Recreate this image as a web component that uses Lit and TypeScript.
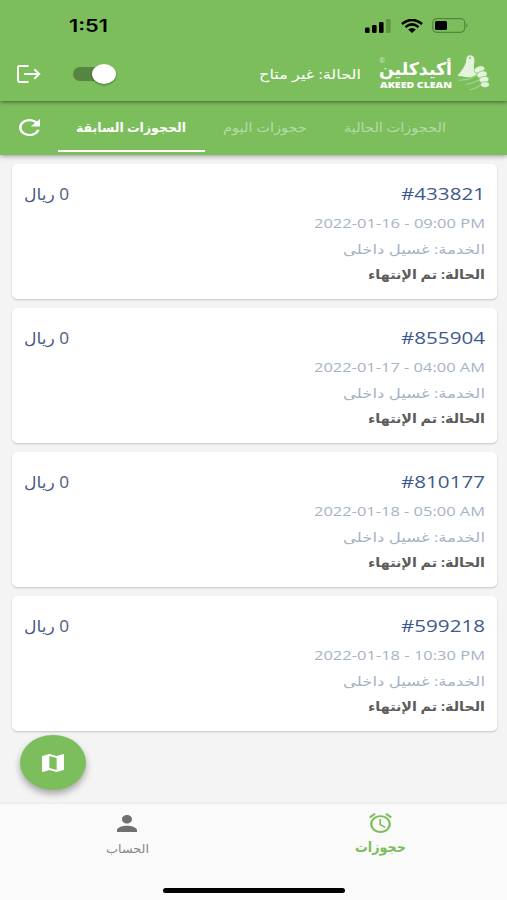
import { LitElement, html, css, svg } from "lit";
import { customElement, property, state, query } from "lit/decorators.js";
import { styleMap } from "lit/directives/style-map.js";

/** One line of text stretched or squeezed to a given width. */
@customElement("fit-text")
class FitText extends LitElement {
  @property({ type: Number }) w = 100;
  @property() text = "";
  @property() dir = "rtl";
  @state() private scale = 1;
  @query(".t") private span!: HTMLElement;

  static styles = css`
    :host { display: block; direction: ltr; white-space: nowrap; }
    .box { display: flex; direction: ltr; }
    .t { flex: none; transform-origin: 0 50%; }
  `;

  updated() {
    const natural = this.span.offsetWidth;
    if (natural) this.scale = this.w / this.span.getBoundingClientRect().width * this.scale;
  }

  render() {
    return html`<div class="box" style=${styleMap({ width: `${this.w}px` })}>
      <span class="t" dir=${this.dir} style=${styleMap({ transform: `scaleX(${this.scale})` })}>${this.text}</span>
    </div>`;
  }
}

interface Booking { id: string; date: string; }

@customElement("booking-card")
class BookingCard extends LitElement {
  @property({ attribute: false }) booking!: Booking;

  static styles = css`
    :host { display: block; box-sizing: border-box; height: 135px; background: #fff; border-radius: 5px;
      box-shadow: 0 1px 2px rgba(0, 0, 0, .2); padding: 17px 12.5px 0 12px; }
    .row { display: flex; justify-content: space-between; direction: rtl; height: 26px; line-height: 26px; }
    .top { color: #40598c; height: 29px; }
    .id { font-size: 17px; }
    .price { font-size: 15.5px; color: #4c5c80; }
    .date { color: #a7b2c5; font-size: 13px; }
    .service { color: #a7b2c5; font-size: 13px; height: 25px; }
    .status { color: #5c5c5c; font-size: 13px; font-weight: bold; height: 25px; }
  `;

  render() {
    const b = this.booking;
    return html`
      <div class="row top">
        <fit-text class="id" dir="ltr" .w=${84} .text=${b.id}></fit-text>
        <fit-text class="price" .w=${45} .text=${"0 ريال"}></fit-text>
      </div>
      <div class="row date"><fit-text dir="ltr" .w=${171} .text=${b.date}></fit-text></div>
      <div class="row service"><fit-text .w=${142} .text=${"الخدمة: غسيل داخلى"}></fit-text></div>
      <div class="row status"><fit-text .w=${117} .text=${"الحالة: تم الإنتهاء"}></fit-text></div>
    `;
  }
}

const signal = svg`
  <rect x="0" y="8.5" width="4.6" height="5.5" rx="1.2"/><rect x="7" y="6" width="4.6" height="8" rx="1.2"/>
  <rect x="14" y="3" width="4.6" height="11" rx="1.2"/><rect x="21" y="0" width="4.6" height="14" rx="1.2" opacity=".22"/>`;

@customElement("app-root")
class AppRoot extends LitElement {
  private bookings: Booking[] = [
    { id: "#433821", date: "2022-01-16 - 09:00 PM" },
    { id: "#855904", date: "2022-01-17 - 04:00 AM" },
    { id: "#810177", date: "2022-01-18 - 05:00 AM" },
    { id: "#599218", date: "2022-01-18 - 10:30 PM" },
  ];

  static styles = css`
    :host { display: flex; flex-direction: column; width: 507px; height: 900px; position: relative; overflow: hidden;
      background: #f4f4f4; font-family: "Open Sans", "DejaVu Sans", sans-serif; direction: ltr; }
    svg { display: block; flex: none; }
    .bar { background: #7cbe5c; height: 101px; flex: none; z-index: 2; box-shadow: 0 1px 4px rgba(0, 0, 0, .5); box-sizing: border-box; }
    .sys { display: flex; align-items: center; height: 51px; padding: 0 38px 0 69px; box-sizing: border-box; }
    .time { font: 600 17px/20px "Inter", sans-serif; margin-right: auto; }
    .wifi { margin: 0 9px 0 10px; }
    .head { display: flex; align-items: center; height: 45px; padding: 0 17px; color: #fff; }
    .toggle { position: relative; width: 43px; height: 20px; margin-left: 32px; margin-right: auto; }
    .track { width: 38px; height: 14px; border-radius: 7px; background: #568541; margin-top: 3px; }
    .knob { position: absolute; right: 0; top: 0; width: 24px; height: 20px; border-radius: 50%; background: #fff; box-shadow: 0 1px 2px rgba(0, 0, 0, .4); }
    .state { font-size: 13.5px; line-height: 20px; margin-right: 18px; }
    .brand { position: relative; margin-right: 5px; padding-top: 1px; }
    .name { font-size: 17.5px; line-height: 19px; font-weight: bold; }
    .latin { font: 800 9px/10px "Open Sans", sans-serif; margin-top: 2px; margin-left: 1px; }
    .reg { position: absolute; left: 0; top: -1px; font-size: 7px; line-height: 8px; opacity: .6; }
    .tabs { display: flex; align-items: stretch; height: 54px; flex: none; background: #7cbe5c; z-index: 1;
      box-shadow: 0 1px 5px rgba(0, 0, 0, .4); color: #b6dba4; font-size: 12.5px; line-height: 53px; }
    .refresh { margin: 18px 18px 0 19px; }
    .tab { display: flex; justify-content: center; box-sizing: border-box; }
    .active { width: 147px; color: #fff; font-weight: bold; border-bottom: 2px solid #fff; height: 51px; padding-right: 2px; }
    .today { width: 119px; }
    .current { width: 142px; }
    .list { display: flex; flex-direction: column; gap: 8.9px; padding: 9px 10px 0 12px; flex: 1; }
    .fab { position: absolute; left: 20px; top: 735px; width: 66px; height: 55px; border-radius: 50%; background: #7cbe5c;
      display: grid; place-items: center; box-shadow: 0 4px 7px rgba(0, 0, 0, .32); }
    .nav { height: 96px; flex: none; background: #fafafa; box-shadow: 0 -1px 2px rgba(0, 0, 0, .05); display: grid;
      grid-template-columns: 1fr 1fr; position: relative; }
    .item { display: flex; flex-direction: column; align-items: center; }
    .account { color: #707070; font-size: 12px; line-height: 18px; padding-top: 11px; }
    .account fit-text { margin-top: 8px; margin-left: 1px; color: #858585; }
    .book { color: #7cbe5c; font-size: 14px; line-height: 20px; font-weight: bold; padding-top: 9px; }
    .book fit-text { margin-top: 4px; }
    .home { position: absolute; left: 163px; top: 84px; width: 182px; height: 4.5px; border-radius: 3px; background: #000; }
  `;

  render() {
    return html`
      <div class="bar">
        <div class="sys">
          <div class="time"><fit-text dir="ltr" .w=${39} .text=${"1:51"}></fit-text></div>
          <svg width="26" height="14" viewBox="0 0 26 14">${signal}</svg>
          <svg class="wifi" width="22" height="14" viewBox="0 0 22 14" fill="none" stroke="#000" stroke-width="2.5">
            <path d="M.9 5Q11-3.2 21.1 5M4.5 8.1Q11 2.6 17.5 8.1"/><path d="M7.2 10.6Q11 7.4 14.8 10.6L11 14Z" fill="#000" stroke="none"/>
          </svg>
          <svg width="37" height="15" viewBox="0 0 37 15">
            <rect x=".7" y=".7" width="32" height="13.6" rx="4" fill="none" stroke="#568541" stroke-width="1.2"/>
            <rect x="3" y="3" width="12" height="9" rx="1.5"/><path d="M34.3 5Q36.8 7.5 34.3 10Z" fill="#568541"/>
          </svg>
        </div>
        <div class="head">
          <svg width="24" height="18" viewBox="0 0 24 18" fill="none" stroke="#fff" stroke-width="1.9">
            <path d="M11.5 1H2.5Q1 1 1 2.5V15.500Q1 17 2.500 17H11.500M7 9H22M17.300 4.300L22.300 9L17.300 13.700"/>
          </svg>
          <div class="toggle"><div class="track"></div><div class="knob"></div></div>
          <fit-text class="state" .w=${102} .text=${"الحالة: غير متاح"}></fit-text>
          <div class="brand">
            <span class="reg">®</span>
            <fit-text class="name" .w=${73} .text=${"أكيدكلين"}></fit-text>
            <fit-text class="latin" dir="ltr" .w=${72} .text=${"AKEED CLEAN"}></fit-text>
          </div>
          <svg width="33" height="38" viewBox="0 0 33 38">
            <path d="M.5 20.500C4 16.500 7.500 12 9 7.500C9 3.500 10 .3 13 .3C17 .3 17.800 4 17.300 7.500C17 10 16.500 12 17 13.500L21 15.500C20.500 20 15 23 9.500 22.200C6 21.500 3 22 .5 20.500Z" fill="#e3f4da"/>
            <circle cx="13" cy="3" r="1.200" fill="#7cbe5c" opacity=".7"/>
            <g fill="#e3f4da" stroke="#7cbe5c" stroke-width=".6">
              <ellipse cx="22.500" cy="14.500" rx="5.500" ry="3.400" transform="rotate(-18 22.500 14.500)"/>
              <ellipse cx="25" cy="19.500" rx="5.300" ry="3.400" transform="rotate(-14 25 19.500)"/>
              <ellipse cx="27" cy="24.600" rx="5" ry="3.200" transform="rotate(-8 27 24.600)"/>
              <ellipse cx="28" cy="29.600" rx="4.300" ry="2.800"/>
            </g>
            <path d="M2 25.500Q12 25.500 20 20M9 29.500Q16 28.500 22 25M13 35Q19 33.500 24 30" fill="none" stroke="#dff2d4" stroke-width=".7" opacity=".7"/>
          </svg>
        </div>
      </div>
      <div class="tabs">
        <svg class="refresh" width="21" height="17" viewBox="4 4 16 16" preserveAspectRatio="none" fill="#fff">
          <path d="M17.650 6.350C16.200 4.900 14.210 4 12 4c-4.420 0-7.990 3.580-7.990 8s3.570 8 7.990 8c3.730 0 6.840-2.550 7.730-6h-2.080c-.82 2.330-3.040 4-5.650 4-3.310 0-6-2.690-6-6s2.690-6 6-6c1.660 0 3.140.69 4.220 1.780L13 11h7V4l-2.350 2.350z"/>
        </svg>
        <div class="tab active"><fit-text .w=${110} .text=${"الحجوزات السابقة"}></fit-text></div>
        <div class="tab today"><fit-text .w=${84} .text=${"حجوزات اليوم"}></fit-text></div>
        <div class="tab current"><fit-text .w=${102} .text=${"الحجوزات الحالية"}></fit-text></div>
      </div>
      <div class="list">${this.bookings.map((b) => html`<booking-card .booking=${b}></booking-card>`)}</div>
      <div class="nav">
        <div class="item account">
          <svg width="20" height="17" viewBox="4 4 16 16" preserveAspectRatio="none" fill="currentColor">
            <path d="M12 12c2.210 0 4-1.790 4-4s-1.790-4-4-4-4 1.790-4 4 1.790 4 4 4zm0 2c-2.670 0-8 1.340-8 4v2h16v-2c0-2.660-5.330-4-8-4z"/>
          </svg>
          <fit-text .w=${43} .text=${"الحساب"}></fit-text>
        </div>
        <div class="item book">
          <svg width="23" height="20" viewBox="2 1.860 20 20.140" preserveAspectRatio="none" fill="currentColor">
            <path d="M22 5.720l-4.600-3.860-1.290 1.530 4.600 3.860L22 5.720zM7.880 3.390L6.600 1.860 2 5.710l1.290 1.530 4.590-3.850zM12.500 8H11v6l4.750 2.850.75-1.230-4-2.370V8zM12 4c-4.970 0-9 4.030-9 9s4.020 9 9 9c4.970 0 9-4.030 9-9s-4.030-9-9-9zm0 16c-3.870 0-7-3.130-7-7s3.130-7 7-7 7 3.130 7 7-3.130 7-7 7z"/>
          </svg>
          <fit-text .w=${51} .text=${"حجوزات"}></fit-text>
        </div>
        <div class="home"></div>
      </div>
      <div class="fab">
        <svg width="22" height="18" viewBox="3 3 18 18" preserveAspectRatio="none" fill="#fff">
          <path d="M20.500 3l-.16.03L15 5.100 9 3 3.360 4.900c-.21.07-.36.25-.36.48V20.500c0 .28.22.5.5.5l.16-.03L9 18.900l6 2.100 5.640-1.900c.21-.07.36-.25.36-.48V3.500c0-.28-.22-.5-.5-.5zM15 19l-6-2.110V5l6 2.110V19z"/>
        </svg>
      </div>
    `;
  }
}
